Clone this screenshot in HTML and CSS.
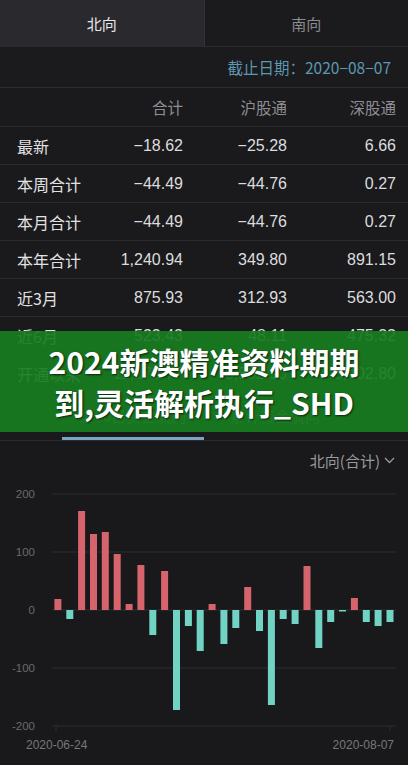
FILE: index.html
```html
<!DOCTYPE html>
<html lang="zh-CN">
<head>
    <meta charset="UTF-8">
    <meta name="viewport" content="width=device-width, initial-scale=1.0">
    <title>沪深港通资金流向</title>
    <link rel="stylesheet" href="styles.css">
</head>
<body>

<div class="tabs">
    <div class="tab active">北向</div>
    <div class="tab">南向</div>
</div>

<div class="date">截止日期：2020−08−07</div>

<div class="table">
    <div class="row head"><span></span><span>合计</span><span>沪股通</span><span>深股通</span></div>
    <div class="row"><span>最新</span><span>−18.62</span><span>−25.28</span><span>6.66</span></div>
    <div class="row"><span>本周合计</span><span>−44.49</span><span>−44.76</span><span>0.27</span></div>
    <div class="row"><span>本月合计</span><span>−44.49</span><span>−44.76</span><span>0.27</span></div>
    <div class="row"><span>本年合计</span><span>1,240.94</span><span>349.80</span><span>891.15</span></div>
    <div class="row"><span>近3月</span><span>875.93</span><span>312.93</span><span>563.00</span></div>
    <div class="row"><span>近6月</span><span>523.43</span><span>48.11</span><span>475.32</span></div>
    <div class="row"><span>开通以来</span><span>11,176.77</span><span>5,532.90</span><span>5,402.80</span></div>
</div>

<div class="subtabs">
    <div class="subtab active">近30日资金流向</div>
    <div class="subtab">累计资金流向</div>
</div>

<div class="picker">
    北向(合计)
    <svg class="chev" width="11" height="7" viewBox="0 0 11 7"><path d="M1 1 L5.5 5.5 L10 1" fill="none" stroke="#9a9a9e" stroke-width="1.3"/></svg>
</div>

<div class="chart">
    <svg width="408" height="287" viewBox="0 0 408 287">
        <g class="grid">
            <line x1="52" y1="15" x2="396" y2="15"/>
            <line x1="52" y1="73" x2="396" y2="73"/>
            <line x1="52" y1="131" x2="396" y2="131"/>
            <line x1="52" y1="189" x2="396" y2="189"/>
            <line x1="52" y1="247" x2="396" y2="247"/>
            <line x1="56" y1="247" x2="56" y2="252"/>
            <line x1="390" y1="247" x2="390" y2="252"/>
        </g>
        <g class="ylab">
            <text x="35" y="19">200</text>
            <text x="35" y="77">100</text>
            <text x="35" y="135">0</text>
            <text x="35" y="193">-100</text>
            <text x="35" y="251">-200</text>
        </g>
        <g class="up">
            <rect x="54.4" y="120" width="7" height="11"/>
            <rect x="78.1" y="32" width="7" height="99"/>
            <rect x="90.0" y="55" width="7" height="76"/>
            <rect x="101.8" y="53" width="7" height="78"/>
            <rect x="113.7" y="75" width="7" height="56"/>
            <rect x="125.6" y="125" width="7" height="6"/>
            <rect x="137.4" y="86" width="7" height="45"/>
            <rect x="161.1" y="92" width="7" height="39"/>
            <rect x="208.6" y="125" width="7" height="6"/>
            <rect x="244.2" y="108" width="7" height="23"/>
            <rect x="303.5" y="87" width="7" height="44"/>
            <rect x="350.9" y="119" width="7" height="12"/>
        </g>
        <g class="down">
            <rect x="66.3" y="131" width="7" height="9"/>
            <rect x="149.3" y="131" width="7" height="25"/>
            <rect x="173.0" y="131" width="7" height="100"/>
            <rect x="184.9" y="131" width="7" height="16"/>
            <rect x="196.7" y="131" width="7" height="41"/>
            <rect x="220.4" y="131" width="7" height="34"/>
            <rect x="232.3" y="131" width="7" height="18"/>
            <rect x="256.0" y="131" width="7" height="21"/>
            <rect x="267.9" y="131" width="7" height="95"/>
            <rect x="279.7" y="131" width="7" height="9"/>
            <rect x="291.6" y="131" width="7" height="14"/>
            <rect x="315.3" y="131" width="7" height="38"/>
            <rect x="327.2" y="131" width="7" height="12"/>
            <rect x="339.0" y="131" width="7" height="1.5"/>
            <rect x="362.8" y="131" width="7" height="12"/>
            <rect x="374.6" y="131" width="7" height="16"/>
            <rect x="386.5" y="131" width="7" height="12"/>
        </g>
        <g class="xlab">
            <text x="26" y="270">2020-06-24</text>
            <text x="394" y="270" text-anchor="end">2020-08-07</text>
        </g>
    </svg>
</div>

<div class="banner">2024新澳精准资料期期<br>到,灵活解析执行_SHD</div>

</body>
</html>
```

FILE: styles.css
```css
body {
    margin: 0;
    background-color: #18181b;
    font-family: "Noto Sans CJK SC", "Noto Sans", sans-serif;
    color: #e2e2e4;
    position: relative;
    width: 408px;
    height: 765px;
    overflow: hidden;
}
.tabs {
    display: flex;
    height: 46px;
    border-bottom: 1px solid #2c2c30;
}
.tab {
    flex: 1;
    display: flex;
    align-items: center;
    justify-content: center;
    font-size: 15px;
    color: #8c8c90;
    background-color: #1b1b1e;
}
.tab.active {
    color: #e6e6e8;
    background-color: #2a2a2e;
    border-right: 1px solid #333337;
}
.date {
    height: 40px;
    display: flex;
    align-items: center;
    justify-content: flex-end;
    padding-right: 17px;
    font-size: 15.5px;
    color: #5d97b0;
    background-color: #1b1b1e;
    border-bottom: 1px solid #2e2e32;
}
.table {
    background-color: #1a1a1d;
}
.row {
    display: grid;
    grid-template-columns: 1fr 100px 104px 109px;
    align-items: center;
    height: 37px;
    padding: 0 12px 0 17px;
    border-bottom: 1px solid #2a2a2e;
    font-size: 16px;
}
.row span:not(:first-child) {
    text-align: right;
    font-family: "Liberation Sans", Arial, sans-serif;
    color: #dcdcde;
}
.row.head {
    height: 38px;
}
.row.head span {
    font-family: "Noto Sans CJK SC", sans-serif !important;
    font-size: 15.5px;
    color: #8e8e92 !important;
}
.subtabs {
    display: flex;
    justify-content: center;
    height: 47px;
    border-bottom: 1px solid #2c2c30;
    background-color: #1a1a1d;
}
.subtab {
    width: 142px;
    display: flex;
    align-items: center;
    justify-content: center;
    font-size: 15px;
    color: #8c8c90;
    border-bottom: 3px solid transparent;
    box-sizing: border-box;
}
.subtab.active {
    border-bottom-color: #7ba6c2;
}
.picker {
    height: 38px;
    display: flex;
    align-items: center;
    justify-content: flex-end;
    gap: 4px;
    padding-right: 13px;
    font-size: 15px;
    color: #9a9a9e;
    background-color: #19191c;
}
.chart {
    background-color: #19191c;
}
.chart svg {
    display: block;
}
.grid line {
    stroke: #2e2e32;
    stroke-width: 1;
}
.ylab text {
    text-anchor: end;
    font-family: "Liberation Sans", Arial, sans-serif;
    font-size: 11.5px;
    fill: #6a6a6e;
}
.xlab text {
    font-family: "Liberation Sans", Arial, sans-serif;
    font-size: 12px;
    fill: #77777b;
}
.up rect {
    fill: #d6646c;
}
.down rect {
    fill: #70d3c3;
}
.banner {
    position: absolute;
    left: 0;
    top: 331px;
    width: 100%;
    height: 101px;
    box-sizing: border-box;
    padding-top: 10px;
    background-color: rgba(23, 124, 31, 0.92);
    text-align: center;
    font-size: 30px;
    font-weight: 700;
    line-height: 41px;
    color: #ffffff;
    text-shadow: 1px 1px 2px rgba(0, 0, 0, 0.7);
}
```
